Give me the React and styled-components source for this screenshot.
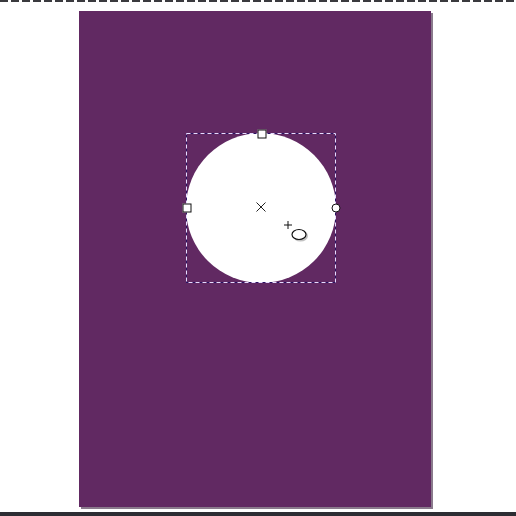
import React from 'react';
import styled, { createGlobalStyle } from 'styled-components';

const GlobalStyle = createGlobalStyle`
  html, body {
    margin: 0;
    padding: 0;
    background: #ffffff;
    font-family: "Liberation Sans", Arial, sans-serif;
  }
`;

const StScreen = styled.div`
  width: 516px;
  height: 516px;
  display: flex;
  flex-direction: column;
  overflow: hidden;
  background: #ffffff;
`;

const StRuler = styled.div`
  height: 2px;
  flex-shrink: 0;
  background: repeating-linear-gradient(
    90deg,
    #3a3a3e 0 8px,
    transparent 8px 11px
  );
`;

const StStage = styled.div`
  flex: 1;
  padding: 9px 0 0 79px;
`;

const StPage = styled.div`
  position: relative;
  width: 352px;
  height: 496px;
  background: #612962;
  box-shadow: 2px 2px 0 #8a7a8c;
`;

const StBottomBar = styled.div`
  height: 4px;
  flex-shrink: 0;
  background: #2d2d33;
`;

// the drawing canvas: a circle with its selection marquee
const StCircle = styled.div`
  position: absolute;
  left: 107px;
  top: 122px;
  width: 150px;
  height: 150px;
  border-radius: 50%;
  background: #ffffff;
`;

const StMarquee = styled.svg`
  position: absolute;
  left: 107px;
  top: 122px;
  overflow: visible;
`;

const StHandle = styled.div`
  position: absolute;
  width: 9px;
  height: 9px;
  box-sizing: border-box;
  background: #ffffff;
  border: 1px solid #111111;
  border-radius: ${({ $round }) => ($round ? '50%' : '0')};
  transform: translate(-50%, -50%);
`;

const StMark = styled.svg`
  position: absolute;
  overflow: visible;
`;

const Page = () => (
  <StPage>
    <StCircle />
    <StMarquee width="150" height="150">
      <rect x="0.5" y="0.5" width="149" height="149" fill="none" stroke="#2a1060" strokeWidth="1" />
      <rect
        x="0.5"
        y="0.5"
        width="149"
        height="149"
        fill="none"
        stroke="#e8dcff"
        strokeWidth="1"
        strokeDasharray="4 3"
      />
    </StMarquee>
    <StHandle style={{ left: 182.5, top: 122.5 }} />
    <StHandle style={{ left: 107.5, top: 196.5 }} />
    <StHandle $round style={{ left: 256.5, top: 196.5 }} />
    {/* center cross */}
    <StMark width="10" height="10" style={{ left: 177, top: 191 }}>
      <path d="M0.5 0.5 L9.5 9.5 M9.5 0.5 L0.5 9.5" stroke="#222" strokeWidth="1" />
    </StMark>
    {/* rotation pivot plus */}
    <StMark width="8" height="8" style={{ left: 205, top: 210 }}>
      <path d="M4 0 V8 M0 4 H8" stroke="#111" strokeWidth="1" />
    </StMark>
    {/* ellipse cursor */}
    <StMark width="20" height="16" style={{ left: 211, top: 216 }}>
      <ellipse cx="10.5" cy="9" rx="7.5" ry="5.5" fill="#9a9a9a" opacity="0.6" />
      <ellipse cx="9" cy="7.5" rx="7" ry="5" fill="#ffffff" stroke="#111" strokeWidth="1.2" />
    </StMark>
  </StPage>
);

export default function App() {
  return (
    <>
      <GlobalStyle />
      <StScreen>
        <StRuler />
        <StStage>
          <Page />
        </StStage>
        <StBottomBar />
      </StScreen>
    </>
  );
}
